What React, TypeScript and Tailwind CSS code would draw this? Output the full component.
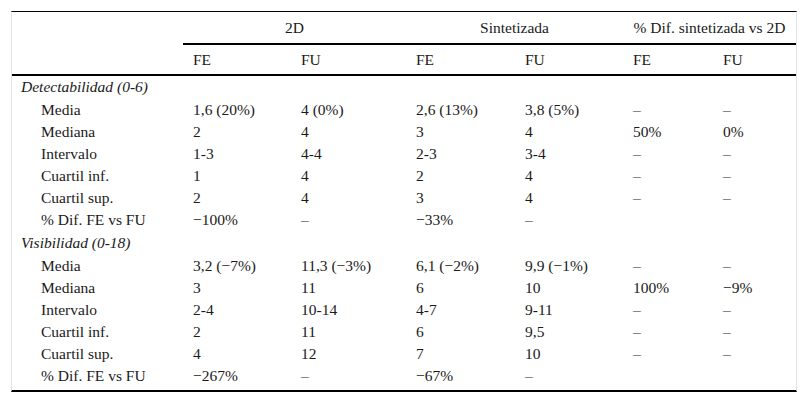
const cols = "grid grid-cols-[171px_108px_115px_109px_108px_90px_83px]";

type Row = { label: string; group?: boolean; cells?: string[] };

const rows: Row[] = [
  { label: "Detectabilidad (0-6)", group: true },
  { label: "Media", cells: ["1,6 (20%)", "4 (0%)", "2,6 (13%)", "3,8 (5%)", "–", "–"] },
  { label: "Mediana", cells: ["2", "4", "3", "4", "50%", "0%"] },
  { label: "Intervalo", cells: ["1-3", "4-4", "2-3", "3-4", "–", "–"] },
  { label: "Cuartil inf.", cells: ["1", "4", "2", "4", "–", "–"] },
  { label: "Cuartil sup.", cells: ["2", "4", "3", "4", "–", "–"] },
  { label: "% Dif. FE vs FU", cells: ["−100%", "–", "−33%", "–", "", ""] },
  { label: "Visibilidad (0-18)", group: true },
  { label: "Media", cells: ["3,2 (−7%)", "11,3 (−3%)", "6,1 (−2%)", "9,9 (−1%)", "–", "–"] },
  { label: "Mediana", cells: ["3", "11", "6", "10", "100%", "−9%"] },
  { label: "Intervalo", cells: ["2-4", "10-14", "4-7", "9-11", "–", "–"] },
  { label: "Cuartil inf.", cells: ["2", "11", "6", "9,5", "–", "–"] },
  { label: "Cuartil sup.", cells: ["4", "12", "7", "10", "–", "–"] },
  { label: "% Dif. FE vs FU", cells: ["−267%", "–", "−67%", "–", "", ""] },
];

export default function App() {
  return (
    <div className="min-h-[403px] w-[808px] bg-white pt-[11px] font-['Liberation_Serif',serif] text-[15.5px] text-[#1a1a1a]">
      <div className="ml-[11px] w-[786px] border-x border-t border-x-[#e4e4e4] border-t-black border-b-2 border-b-black pb-[4px]">
        {/* group headings */}
        <div className={`${cols} h-[33px]`}>
          <div />
          {["2D", "Sintetizada", "% Dif. sintetizada vs 2D"].map((g) => (
            <div
              key={g}
              className="col-span-2 flex items-center justify-center border-b-2 border-black"
            >
              {g}
            </div>
          ))}
        </div>
        {/* sub headings */}
        <div className={`${cols} h-[31px] border-b-2 border-black`}>
          <div />
          {["FE", "FU", "FE", "FU", "FE", "FU"].map((h, i) => (
            <div key={i} className="flex items-center pl-[10px]">
              {h}
            </div>
          ))}
        </div>
        {rows.map((r, i) =>
          r.group ? (
            <div
              key={i}
              className={`flex items-center pl-[9px] italic ${i > 0 ? "mt-px h-[23px]" : "h-[22px]"}`}
            >
              {r.label}
            </div>
          ) : (
            <div key={i} className={`${cols} h-[22px] items-center`}>
              <div className="pl-[29px]">{r.label}</div>
              {r.cells!.map((c, j) => (
                <div key={j} className="pl-[10px]">
                  {c}
                </div>
              ))}
            </div>
          )
        )}
      </div>
    </div>
  );
}
